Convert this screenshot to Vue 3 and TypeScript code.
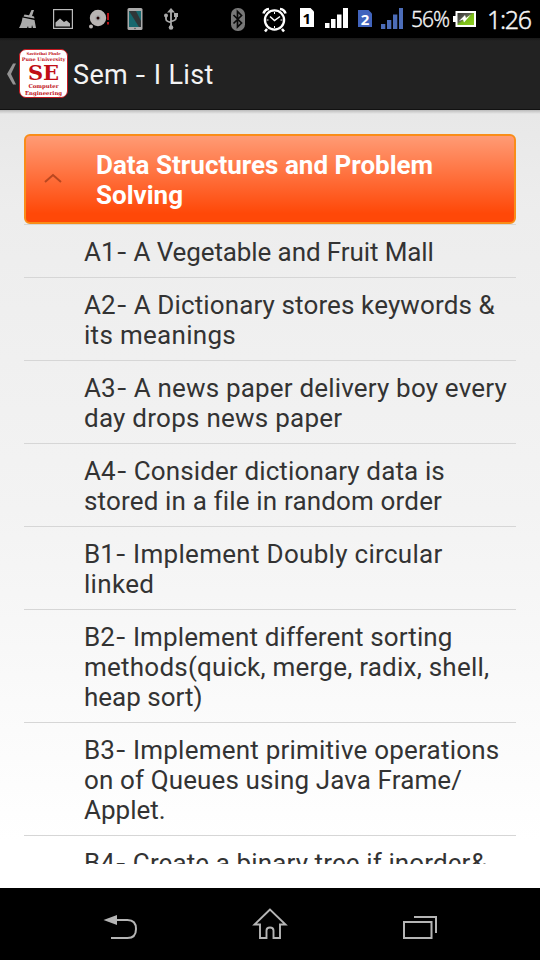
<script setup lang="ts">
interface Line {
  text: string
  tracking: number
}

interface Experiment {
  code: string
  lines: Line[]
}

const experiments: Experiment[] = [
  { code: 'A1', lines: [{ text: ' A Vegetable and Fruit Mall', tracking: -0.1 }] },
  { code: 'A2', lines: [{ text: ' A Dictionary stores keywords &', tracking: 0.12 }, { text: 'its meanings', tracking: 0.3 }] },
  { code: 'A3', lines: [{ text: ' A news paper delivery boy every', tracking: 0.18 }, { text: 'day drops news paper', tracking: 0.25 }] },
  { code: 'A4', lines: [{ text: ' Consider dictionary data is', tracking: 0.13 }, { text: 'stored in a file in random order', tracking: 0.16 }] },
  { code: 'B1', lines: [{ text: ' Implement Doubly circular', tracking: 0.3 }, { text: 'linked', tracking: 0.3 }] },
  { code: 'B2', lines: [{ text: ' Implement different sorting', tracking: 0.13 }, { text: 'methods(quick, merge, radix, shell,', tracking: 0.23 }, { text: 'heap sort)', tracking: 0 }] },
  { code: 'B3', lines: [{ text: ' Implement primitive operations', tracking: 0.22 }, { text: 'on of Queues using Java Frame/', tracking: 0.12 }, { text: 'Applet.', tracking: 0 }] },
  { code: 'B4', lines: [{ text: ' Create a binary tree if inorder&', tracking: 0.11 }] },
]
</script>

<template>
  <div class="screen">
    <header class="status">
      <svg class="i-broom" viewBox="18 0 18 38"><path fill="#aaa" d="M31.500 10h2.500l-2 6 2 .5.5 2-11-2 1-2 4.500.8zM22.500 17.500l12 2.500 1.500 8h-3l-1-3-.5 3h-3l-.5-2-1 2H19c2-3 3-7 3.500-10.500z" /></svg>
      <svg class="i-image" viewBox="53 0 20 38"><rect x="53.600" y="9.600" width="18.800" height="18.800" fill="none" stroke="#bbb" stroke-width="1.200" /><path fill="#b5b5b5" d="M55.500 26.500v-4l4.500-4 4 3.500 2.500-1.500 3.500 3v3z" /></svg>
      <svg class="i-disc" viewBox="88 0 22 38"><circle cx="98" cy="18" r="5.200" fill="none" stroke="#b9b4b2" stroke-width="6" /><circle cx="98" cy="18" r="2.900" fill="#aaa" /><circle cx="98" cy="18" r="1.500" fill="#200" /><circle cx="91" cy="26.500" r="2" fill="#b9b4b2" /><path d="M108 13v7m0 2v2.500" stroke="#b51218" stroke-width="2" /></svg>
      <svg class="i-phone" viewBox="127 0 16 38"><rect x="127.500" y="8" width="15" height="22" rx="1.500" fill="#aaa" /><rect x="129" y="11" width="12" height="16" fill="#17686e" /><path d="M129 11h7l5 10v6h-2z" fill="#303638" /><circle cx="135" cy="28.500" r=".8" fill="#555" /></svg>
      <svg class="i-usb" viewBox="163 0 16 38"><g fill="none" stroke="#aaa" stroke-width="1.800"><path d="M171 11v16M166 15v4q0 2 2 2.500l3 1M176 14v4q0 2-2 2.500l-3 1" /></g><path fill="#aaa" d="M171 8l4 4.500h-8zM174 13h4v4h-4z" /><circle cx="166" cy="15.500" r="2" fill="#aaa" /><circle cx="171" cy="27.500" r="2.300" fill="#aaa" /></svg>
      <svg class="i-bluetooth" viewBox="231 0 14 38"><rect x="231" y="8" width="14" height="23" rx="6.500" fill="#777" /><path d="M233.500 15l8 8-4 4V11.500l4 4-8 8" fill="none" stroke="#080808" stroke-width="1.700" /></svg>
      <svg class="i-alarm" viewBox="262 0 25 38"><g fill="none" stroke="#fff"><circle cx="274.500" cy="20" r="9.600" stroke-width="2.300" /><path d="M263.500 13.500q1-4 5.500-4.500M280 9q4.500.5 5.500 4.500" stroke-width="2.600" /><path d="M270 16.500l4.500 4 5.500-4" stroke-width="1.500" /><path d="M267 29l-2 2.500M282 29l2 2.500" stroke-width="2.500" /><path d="M274.500 12v2m0 12v2M266.500 20h2m12 0h2" stroke-width="1" /></g></svg>
      <svg class="i-sim1" viewBox="300 0 14 38"><path d="M300 8h10.500l3.500 3.500V27h-14z" fill="#fff" /><text x="306.800" y="23.500" text-anchor="middle" class="sim-number">1</text></svg>
      <svg class="i-signal1" viewBox="325 0 23 38"><path fill="#fff" d="M325 23h4.500v5H325zM331 19h4.500v9H331zM337 14.500h4.500V28H337zM343 8h5v20h-5z" /></svg>
      <svg class="i-sim2" viewBox="358 0 14 38"><path d="M358 10h10.500l3.500 3.500V27h-14z" fill="#4164bd" /><text x="365" y="24.500" text-anchor="middle" class="sim-number light">2</text></svg>
      <svg class="i-signal2" viewBox="381 0 23 38"><path fill="#4c6db9" d="M381 24h4.300v5H381zM387 20h4.300v9H387zM393 14.500h4.300V29H393zM399 8h4v21h-4z" /></svg>
      <span class="percent">56%</span>
      <svg class="i-battery" viewBox="453 0 23 38"><defs><linearGradient id="charge" x1="0" y1="0" x2="1" y2="1"><stop offset="0" stop-color="#34352e" /><stop offset=".4" stop-color="#5b5c54" /><stop offset=".52" stop-color="#79bc17" /><stop offset="1" stop-color="#8dcb22" /></linearGradient></defs><path d="M453 16h2.500v-5H476v16h-20.500v-5H453z" fill="#fff" /><rect x="457.500" y="13" width="16.500" height="12" fill="url(#charge)" /><path d="M459 21l6-6 1 3 5-3.500-7 8-1-3z" fill="#fff" /></svg>
      <span class="clock">1:26</span>
    </header>

    <nav class="action-bar">
      <svg class="up" viewBox="0 0 11 24"><path d="M10 1.500L7 1.500 1 12l6 10.500h3L5 12z" fill="#929292" /></svg>
      <div class="logo">
        <span class="logo-top">Savitribai Phule</span>
        <span class="logo-uni">Pune University</span>
        <span class="logo-se">SE</span>
        <span class="logo-dept">Computer</span>
        <span class="logo-dept">Engineering</span>
      </div>
      <h1>Sem <span class="dash">-</span> I List</h1>
    </nav>

    <main class="content">
      <section class="list">
        <button class="group">
          <svg viewBox="0 0 18 10"><path d="M1 9l8-7 8 7" fill="none" stroke="#b94720" stroke-width="2" /></svg>
          <span>Data Structures and Problem<br />Solving</span>
        </button>
        <ul>
          <li v-for="item in experiments" :key="item.code">
            <div v-for="(line, index) in item.lines" :key="line.text" class="line">
              <template v-if="index === 0">{{ item.code }}<span class="dash">-</span></template><span :style="{ letterSpacing: line.tracking + 'px' }">{{ line.text }}</span>
            </div>
          </li>
        </ul>
      </section>
    </main>

    <footer class="navigation">
      <svg viewBox="0 0 36 36"><path d="M14 14h11.500q8.500 0 8.500 9t-8.500 9H9" fill="none" stroke="#b5b5b5" stroke-width="2" /><path d="M1.500 14L15 9v10z" fill="#b5b5b5" /></svg>
      <svg viewBox="0 0 36 36"><path d="M18 3.500L2.500 18.500H8V32h6.500v-7.500q0-3 3.500-3t3.500 3V32H28V18.500h5.500z" fill="none" stroke="#b5b5b5" stroke-width="1.900" /></svg>
      <svg viewBox="0 0 36 36"><path d="M2 16h27.500v16H2zM12 11h22v16" fill="none" stroke="#b5b5b5" stroke-width="2" /></svg>
    </footer>
  </div>
</template>

<style>
body { margin: 0; background: #000; }
</style>

<style scoped>
.screen {
  width: 540px;
  height: 960px;
  display: flex;
  flex-direction: column;
  overflow: hidden;
  font-family: Roboto, "Liberation Sans", sans-serif;
}
.status {
  height: 38px;
  flex: none;
  display: flex;
  align-items: center;
  background: #000;
  color: #f5f5f5;
}
.status svg { height: 38px; flex: none; }
.i-broom { width: 18px; margin-left: 18px; }
.i-image { width: 20px; margin-left: 17px; }
.i-disc { width: 22px; margin-left: 15px; }
.i-phone { width: 16px; margin-left: 17px; }
.i-usb { width: 16px; margin-left: 20px; }
.i-bluetooth { width: 14px; margin-left: 52px; }
.i-alarm { width: 25px; margin-left: 17px; }
.i-sim1 { width: 14px; margin-left: 13px; }
.i-signal1 { width: 23px; margin-left: 11px; }
.i-sim2 { width: 14px; margin-left: 10px; }
.i-signal2 { width: 23px; margin-left: 9px; }
.i-battery { width: 23px; }
.sim-number { font: bold 15px "Noto Sans", sans-serif; fill: #000; }
.sim-number.light { fill: #fff; }
.percent {
  width: 42px;
  margin-left: 7px;
  font: 300 21px/38px "Noto Sans", sans-serif;
  letter-spacing: -1px;
  white-space: nowrap;
  -webkit-text-stroke: 0.3px #f5f5f5;
}
.clock {
  margin-left: 11px;
  font: 300 25px/38px "Noto Sans", sans-serif;
  letter-spacing: -1.3px;
  -webkit-text-stroke: 0.4px #f5f5f5;
}
.action-bar {
  height: 72px;
  box-sizing: border-box;
  flex: none;
  display: flex;
  align-items: center;
  padding-left: 6px;
  background: linear-gradient(#191919, #222 3px);
  border-bottom: 1px solid #111;
}
.up { width: 11px; height: 24px; }
.logo {
  width: 49px;
  height: 49px;
  box-sizing: border-box;
  margin-left: 2px;
  border: 1.5px solid #c31820;
  border-radius: 7px;
  background: #fff;
  display: flex;
  flex-direction: column;
  align-items: center;
  overflow: hidden;
  color: #c00d15;
  font-family: "DejaVu Serif", serif;
  font-weight: bold;
  white-space: nowrap;
}
.logo-top { font-size: 3.8px; line-height: 5px; padding-top: 1px; }
.logo-uni { font-size: 4.9px; line-height: 6px; }
.logo-se { font-size: 21px; line-height: 21px; }
.logo-dept { font-size: 5.4px; line-height: 6.5px; }
h1 {
  margin: 2px 0 0 5px;
  color: #f3f3f3;
  font-size: 27px;
  font-weight: 400;
  line-height: 32px;
  letter-spacing: 0.35px;
  white-space: nowrap;
}
.dash {
  display: inline-block;
  width: 11.5px;
  text-align: center;
  transform: scaleX(1.25);
}
.content {
  height: 778px;
  flex: none;
  box-sizing: border-box;
  padding: 24px 24px;
  background: linear-gradient(#bbb, #e8e8e8 4px, #ededed 100px, #f3f3f3 400px, #fff 730px);
}
.list { height: 730px; overflow: hidden; }
.group {
  width: 492px;
  height: 90px;
  box-sizing: border-box;
  display: flex;
  align-items: center;
  padding: 0 0 0 18px;
  border: 2px solid #f98d18;
  border-radius: 6px;
  background: linear-gradient(#ff9b75, #ff4808 90%);
  color: #fff;
  font: bold 26px/30px Roboto, sans-serif;
  text-align: left;
}
.group span { padding-top: 2px; }
.group svg { width: 18px; height: 10px; flex: none; margin: 0 34px 2px 0; }
ul { margin: 0; padding: 0; list-style: none; }
li {
  border-top: 1px solid #d6d6d6;
  padding: 12px 0 10px 60px;
  color: #333;
  font-size: 26px;
  line-height: 30px;
}
.line { height: 30px; white-space: pre; }
.navigation {
  height: 72px;
  flex: none;
  display: flex;
  justify-content: center;
  align-items: center;
  gap: 114px;
  background: #000;
}
.navigation svg { width: 36px; height: 36px; }
</style>
